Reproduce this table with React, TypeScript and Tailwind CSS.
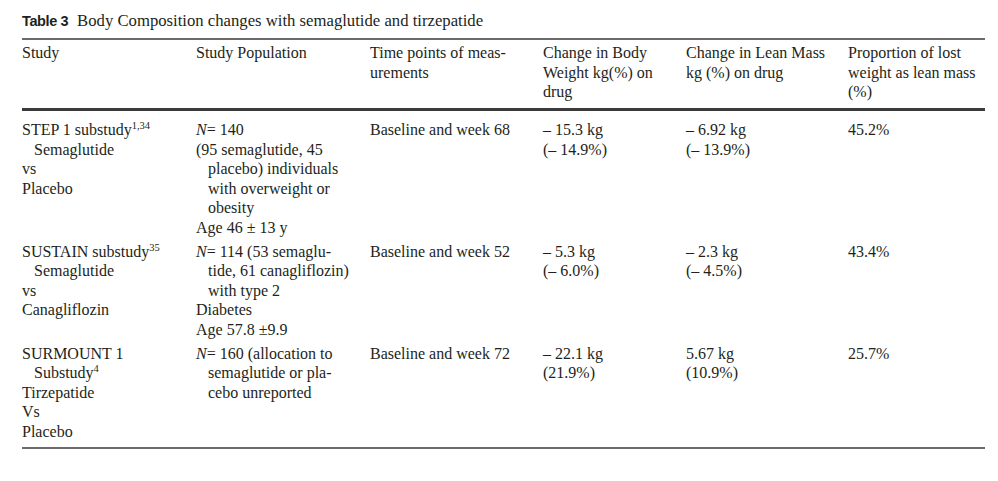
import React from 'react';

type Line = { text: React.ReactNode; indent?: boolean };

const serif = { fontFamily: '"Liberation Serif", "Times New Roman", serif' };

const header: string[][] = [
  ['Study'],
  ['Study Population'],
  ['Time points of meas-', 'urements'],
  ['Change in Body', 'Weight kg(%) on', 'drug'],
  ['Change in Lean Mass', 'kg (%) on drug'],
  ['Proportion of lost', 'weight as lean mass', '(%)'],
];

const N = <i>N</i>;
const sup = 'text-[10.5px] -top-[6px]';

const rows: Line[][][] = [
  [
    [
      { text: <>STEP 1 substudy<sup className={sup}>1,34</sup></> },
      { text: 'Semaglutide', indent: true },
      { text: 'vs' },
      { text: 'Placebo' },
    ],
    [
      { text: <>{N}= 140</> },
      { text: '(95 semaglutide, 45' },
      { text: 'placebo) individuals', indent: true },
      { text: 'with overweight or', indent: true },
      { text: 'obesity', indent: true },
      { text: 'Age 46 ± 13 y' },
    ],
    [{ text: 'Baseline and week 68' }],
    [{ text: '– 15.3 kg' }, { text: '(– 14.9%)' }],
    [{ text: '– 6.92 kg' }, { text: '(– 13.9%)' }],
    [{ text: '45.2%' }],
  ],
  [
    [
      { text: <>SUSTAIN substudy<sup className={sup}>35</sup></> },
      { text: 'Semaglutide', indent: true },
      { text: 'vs' },
      { text: 'Canagliflozin' },
    ],
    [
      { text: <>{N}= 114 (53 semaglu-</> },
      { text: 'tide, 61 canagliflozin)', indent: true },
      { text: 'with type 2', indent: true },
      { text: 'Diabetes' },
      { text: 'Age 57.8 ±9.9' },
    ],
    [{ text: 'Baseline and week 52' }],
    [{ text: '– 5.3 kg' }, { text: '(– 6.0%)' }],
    [{ text: '– 2.3 kg' }, { text: '(– 4.5%)' }],
    [{ text: '43.4%' }],
  ],
  [
    [
      { text: 'SURMOUNT 1' },
      { text: <>Substudy<sup className={sup}>4</sup></>, indent: true },
      { text: 'Tirzepatide' },
      { text: 'Vs' },
      { text: 'Placebo' },
    ],
    [
      { text: <>{N}= 160 (allocation to</> },
      { text: 'semaglutide or pla-', indent: true },
      { text: 'cebo unreported', indent: true },
    ],
    [{ text: 'Baseline and week 72' }],
    [{ text: '– 22.1 kg' }, { text: '(21.9%)' }],
    [{ text: '5.67 kg' }, { text: '(10.9%)' }],
    [{ text: '25.7%' }],
  ],
];

const cols = 'grid grid-cols-[174px_174px_173px_143px_162px_137px]';

const Cell: React.FC<{ lines: Line[] }> = ({ lines }) => (
  <div>
    {lines.map((l, i) => (
      <div key={i} className={l.indent ? 'pl-3 whitespace-nowrap' : 'whitespace-nowrap'}>
        {l.text}
      </div>
    ))}
  </div>
);

export default function App() {
  return (
    <div className="w-[998px] h-[481px] bg-white text-[#231f20] overflow-hidden" style={serif}>
      <div className="ml-[22px] w-[963px] pt-[11px]">
        {/* Caption */}
        <div className="flex items-baseline h-[27px] text-[16.7px] leading-[20px]">
          <span
            className="font-bold text-[14.5px] tracking-[-0.4px] mr-[9px]"
            style={{ fontFamily: '"Liberation Sans", Arial, sans-serif' }}
          >
            Table 3
          </span>
          <span>Body Composition changes with semaglutide and tirzepatide</span>
        </div>

        {/* Header */}
        <div className={`${cols} border-t-2 border-[#6b6b6b] border-b-[3px] border-b-[#3a3a3a] pt-[3px] h-[73px] text-[16px] leading-[19.6px]`}>
          {header.map((h, i) => (
            <div key={i}>
              {h.map((t, j) => (
                <div key={j} className="whitespace-nowrap">{t}</div>
              ))}
            </div>
          ))}
        </div>

        {/* Body */}
        <div className="border-b-2 border-[#6b6b6b] pt-[9px] pb-[1px] text-[16px] leading-[19.6px]">
          {rows.map((r, i) => (
            <div key={i} className={`${cols} pb-[4px]`}>
              {r.map((c, j) => (
                <Cell key={j} lines={c} />
              ))}
            </div>
          ))}
        </div>
      </div>
    </div>
  );
}
